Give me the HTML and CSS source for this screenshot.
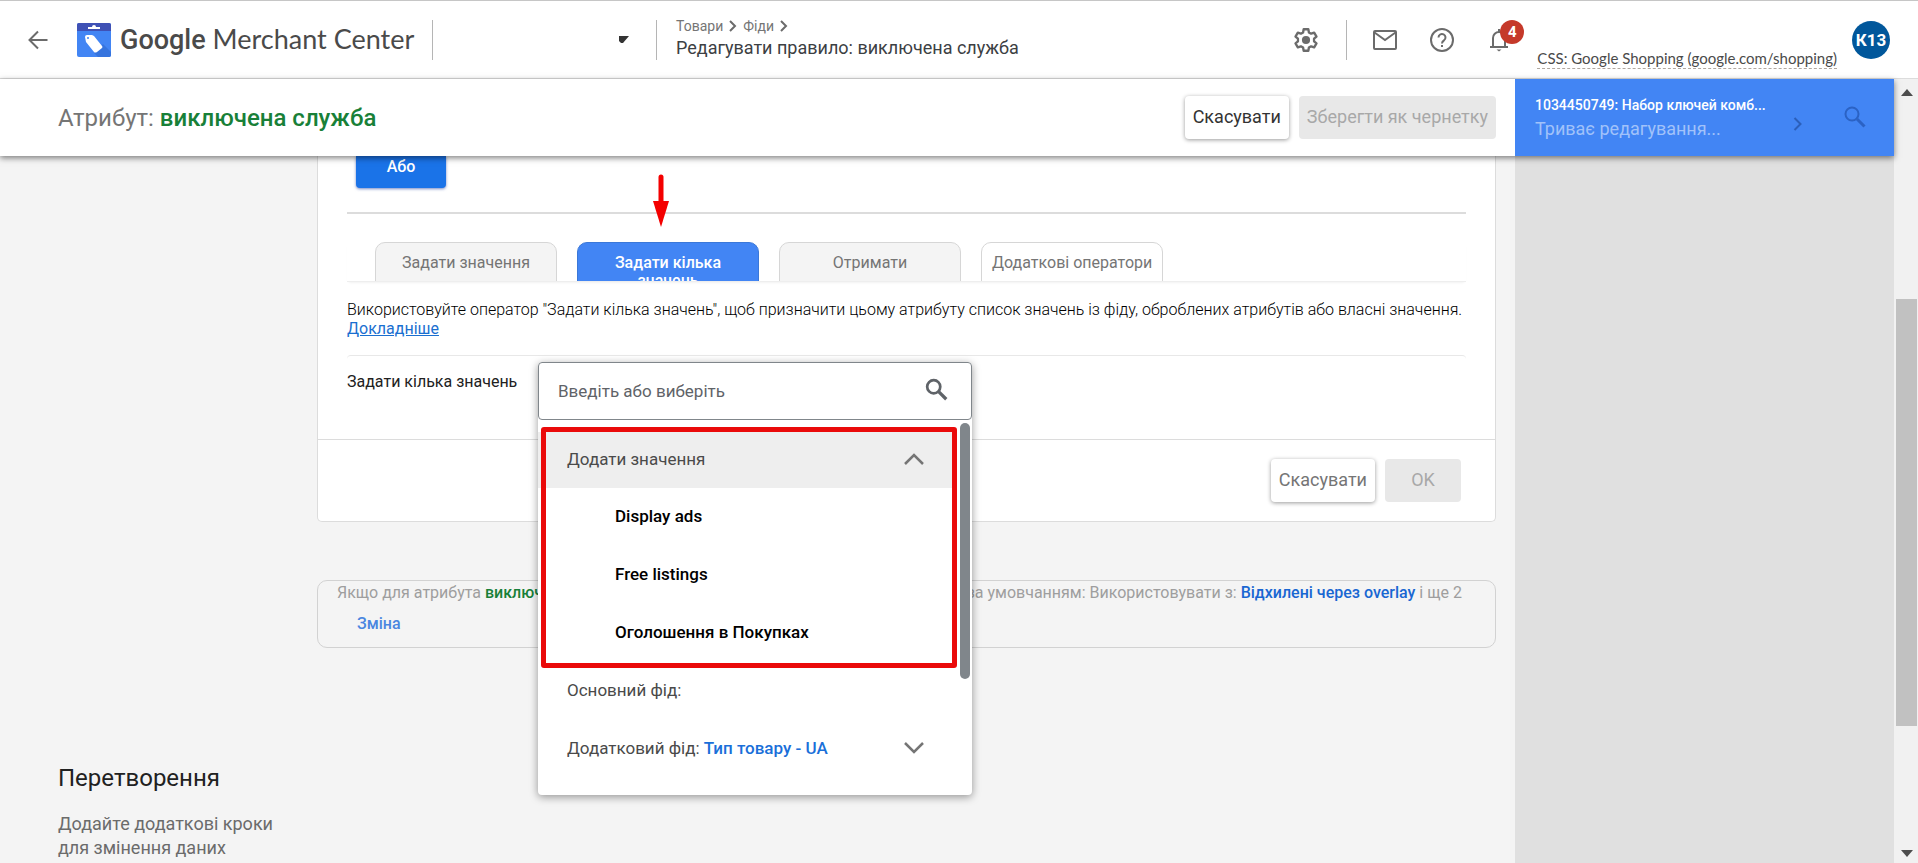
FILE: index.html
```html
<!DOCTYPE html>
<html lang="uk">
<head>
<meta charset="utf-8">
<title>Google Merchant Center</title>
<meta name="viewport" content="width=device-width, initial-scale=1">
<link rel="stylesheet" href="styles.css">
</head>
<body>
<header class="topbar">
  <button class="icon-btn back" aria-label="Назад"><svg width="20" height="20" viewBox="0 0 20 20" fill="none" stroke="#6b6b6b" stroke-width="2"><path d="M19.500 10H2M10 1.500L1.500 10L10 18.500"/></svg></button>
  <svg class="logo" width="34" height="34" viewBox="0 0 34 34"><rect width="34" height="34" rx="2" fill="#4285f4"/><path d="M0 8V2a2 2 0 0 1 2-2h30a2 2 0 0 1 2 2v6z" fill="#3f51b5"/><path d="M11 4h4a2 2 0 0 1 4 0h4v2H11z" fill="#fff"/><path d="M17 30l9-9 8 8v3a2 2 0 0 1-2 2H21z" fill="#3674de"/><path d="M8 14q0-2 2-2h5l2 1 8 10q1 1 0 2l-5 4q-2 1-3 0l-8-10z" fill="#fff"/><circle cx="11" cy="15" r="1" fill="#4285f4"/></svg>
  <div class="brand"><span class="brand-google">Google</span> Merchant Center</div>
  <button class="account-picker" aria-label="Вибрати обліковий запис"><svg width="10" height="7" viewBox="0 0 10 7"><path d="M0 0h10L4 7H2L0 5z" fill="#333"/></svg></button>
  <div class="crumbs">
    <nav class="trail"><a href="#">Товари</a><svg width="8" height="12" viewBox="0 0 8 12"><path d="M1 1l5 5-5 5"/></svg><a href="#">Фіди</a><svg width="8" height="12" viewBox="0 0 8 12"><path d="M1 1l5 5-5 5"/></svg></nav>
    <div class="page-title">Редагувати правило: виключена служба</div>
  </div>
  <div class="tools">
    <button class="icon-btn" aria-label="Налаштування"><svg width="28" height="28" viewBox="0 0 24 24" fill="none" stroke="#6b6b6b" stroke-width="2" stroke-linejoin="round"><path d="M10 2.800h4l.5 2.700 1.900 1.100 2.600-.9 2 3.400-2.100 1.800v2.200l2.100 1.800-2 3.400-2.600-.9-1.900 1.100-.5 2.700h-4l-.5-2.700-1.900-1.100-2.600.9-2-3.400 2.100-1.800v-2.200L3 9.100l2-3.400 2.600.9 1.900-1.100z"/><circle cx="12" cy="12" r="3.500" fill="#6b6b6b" stroke="none"/></svg></button>
    <span class="rule"></span>
    <button class="icon-btn" aria-label="Пошта"><svg width="24" height="20" viewBox="0 0 24 20" fill="none" stroke="#6b6b6b" stroke-width="2"><rect x="1" y="1" width="22" height="18" rx="1"/><path d="M1.500 2.500L12 10l10.500-7.500"/></svg></button>
    <button class="icon-btn" aria-label="Довідка"><svg width="24" height="24" viewBox="0 0 24 24" fill="none" stroke="#6b6b6b" stroke-width="2"><circle cx="12" cy="12" r="11"/><path d="M8.500 9.500a3.500 3.500 0 1 1 5.600 2.800C12.900 13.200 12 13.800 12 15.500"/><path d="M12 17v2"/></svg></button>
    <button class="icon-btn bell" aria-label="Сповіщення"><svg width="24" height="24" viewBox="-2 0 24 24" fill="none" stroke="#6b6b6b" stroke-width="2"><path d="M1 19h18M4 19V10a6 6 0 0 1 12 0v9M10 4V1"/><path d="M7.500 21.500h5l-2.500 2z" fill="#6b6b6b" stroke="none"/></svg><span class="badge">4</span></button>
  </div>
  <a class="css-link" href="#">CSS: Google Shopping (google.com/shopping)</a>
  <button class="avatar">К13</button>
</header>

<div class="below">
  <div class="page">
    <div class="actionbar">
      <h1 class="attribute">Атрибут: <b>виключена служба</b></h1>
      <button class="btn">Скасувати</button>
      <button class="btn btn-off" disabled>Зберегти як чернетку</button>
      <div class="product">
        <div class="product-text"><div class="product-name">1034450749: Набор ключей комб...</div><div class="product-state">Триває редагування...</div></div>
        <svg class="product-next" width="10" height="16" viewBox="0 0 10 16" fill="none" stroke="#2b5fba" stroke-width="2"><path d="M1.500 2l6 6-6 6"/></svg>
        <svg width="22" height="22" viewBox="0 0 22 22" fill="none" stroke="#2b62c4" stroke-width="2"><circle cx="8" cy="8" r="6.500"/><path d="M13 13l7.500 7.500" stroke-width="3"/></svg>
      </div>
    </div>
    <div class="body">
      <main class="content">
        <div class="card">
          <div class="card-main">
            <button class="or-btn">Або</button>
            <hr class="line">
            <svg class="pointer" width="16" height="53" viewBox="0 0 16 53"><path d="M8 3v27" stroke="#f40000" stroke-width="5" stroke-linecap="round"/><path d="M0 27h16L8 53z" fill="#f40000"/></svg>
            <div class="tabs" role="tablist">
              <button class="tab" role="tab">Задати значення</button>
              <button class="tab tab-on" role="tab" aria-selected="true">Задати кілька значень</button>
              <button class="tab" role="tab">Отримати</button>
              <button class="tab tab-more" role="tab">Додаткові оператори</button>
            </div>
            <p class="hint">Використовуйте оператор "Задати кілька значень", щоб призначити цьому атрибуту список значень із фіду, оброблених атрибутів або власні значення.<br><a href="#">Докладніше</a></p>
            <div class="field">
              <label class="field-label" for="values">Задати кілька значень</label>
              <div class="combo">
                <div class="combo-box">
                  <input id="values" type="text" placeholder="Введіть або виберіть">
                  <svg width="24" height="24" viewBox="0 0 22 22" fill="none" stroke="#5f6368" stroke-width="2.500"><circle cx="8" cy="8" r="6"/><path d="M12.500 12.500l7 7" stroke-width="3"/></svg>
                </div>
                <div class="menu">
                  <div class="menu-head">Додати значення<svg width="20" height="12" viewBox="0 0 20 12"><path d="M1 11l9-9 9 9"/></svg></div>
                  <div class="menu-item">Display ads</div>
                  <div class="menu-item">Free listings</div>
                  <div class="menu-item">Оголошення в Покупках</div>
                  <div class="menu-row">Основний фід:</div>
                  <div class="menu-row"><span>Додатковий фід: <b>Тип товару - UA</b></span><svg width="20" height="12" viewBox="0 0 20 12"><path d="M1 1l9 9 9-9"/></svg></div>
                  <span class="highlight"></span>
                  <span class="menu-thumb"></span>
                </div>
              </div>
            </div>
          </div>
          <div class="card-foot">
            <button class="btn btn-soft">Скасувати</button>
            <button class="btn btn-off btn-ok" disabled>OK</button>
          </div>
        </div>
        <div class="fallback">
          <div class="fallback-text"><span>Якщо для атрибута <b class="green">виключена служба</b></span><span>правило за умовчанням: Використовувати з: <b class="blue">Відхилені через overlay</b> і ще 2</span></div>
          <a class="change" href="#">Зміна</a>
        </div>
        <section class="transform">
          <h2>Перетворення</h2>
          <p>Додайте додаткові кроки для змінення даних</p>
        </section>
      </main>
      <aside class="preview"></aside>
    </div>
  </div>
  <div class="scrollbar">
    <svg width="12" height="7" viewBox="0 0 12 7"><path d="M6 0l6 7H0z" fill="#4d4d4d"/></svg>
    <div class="track"><div class="thumb"></div></div>
    <svg width="12" height="7" viewBox="0 0 12 7"><path d="M0 0h12L6 7z" fill="#4d4d4d"/></svg>
  </div>
</div>
</body>
</html>
```
FILE: styles.css
```css
* { box-sizing: border-box; }
body {
  margin: 0;
  height: 100vh;
  overflow: hidden;
  display: flex;
  flex-direction: column;
  font-family: Roboto, "Liberation Sans", sans-serif;
  font-size: 16px;
  color: #212121;
  background: #f4f4f4;
}
button { font: inherit; border: 0; padding: 0; background: none; cursor: pointer; }
a { color: inherit; text-decoration: none; }
svg { display: block; flex: none; }

.topbar {
  display: flex;
  align-items: center;
  height: 79px;
  flex: none;
  padding: 0 28px;
  background: #fff;
  border-top: 1px solid #c6c6c6;
  border-bottom: 1px solid #dcdcdc;
}
.logo { margin: 0 9px 0 29px; }
.brand { font-family: Lato, Roboto, sans-serif; font-size: 27px; line-height: 36px; color: #4a4a4a; white-space: nowrap; width: 312px; }
.brand-google { font-family: Roboto, sans-serif; font-weight: 500; }
.account-picker {
  width: 225px;
  height: 40px;
  padding-right: 27px;
  display: flex;
  align-items: center;
  justify-content: flex-end;
  border-left: 1px solid #b5b5b5;
  border-right: 1px solid #b5b5b5;
}
.crumbs { margin-left: 19px; white-space: nowrap; }
.trail { display: flex; align-items: center; gap: 6px; font-size: 14px; line-height: 18px; color: #757575; }
.trail svg { fill: none; stroke: #6b6b6b; stroke-width: 2; }
.page-title { padding-bottom: 2px; font-size: 18px; line-height: 26px; color: #3c4043; }
.tools { margin-left: auto; display: flex; align-items: center; gap: 33px; }
.tools .rule { width: 1px; height: 40px; margin: 0 -7px; background: #b5b5b5; }
.bell { position: relative; }
.badge {
  position: absolute;
  left: 13px;
  top: -8px;
  width: 24px;
  height: 24px;
  border-radius: 50%;
  background: #c5392a;
  color: #fff;
  font-size: 15px;
  font-weight: 700;
  line-height: 24px;
  text-align: center;
}
.css-link {
  align-self: flex-end;
  margin: 0 15px 9px 26px;
  font-family: Lato, Roboto, sans-serif;
  font-size: 15px;
  line-height: 20px;
  color: #4a4a4a;
  border-bottom: 1px dashed #b0a8a0;
  white-space: nowrap;
}
.avatar {
  width: 38px;
  height: 38px;
  border-radius: 50%;
  background: #01579b;
  color: #fff;
  font-size: 17px;
  font-weight: 700;
}

.below { flex: 1; min-height: 0; display: flex; }
.page { flex: 1; min-width: 0; display: flex; flex-direction: column; }
.actionbar {
  position: relative;
  z-index: 2;
  flex: none;
  display: flex;
  align-items: center;
  gap: 10px;
  height: 77px;
  padding-left: 58px;
  background: #fff;
  box-shadow: 0 2px 6px rgba(0, 0, 0, .5);
}
.attribute { flex: 1; margin: 0; font-size: 24px; font-weight: 400; color: #757575; }
.attribute b { font-weight: 500; color: #188038; }
.btn {
  height: 43px;
  padding: 0 8px 2px;
  border-radius: 4px;
  background: #fff;
  color: #333;
  font-size: 18px;
  box-shadow: 0 1px 4px rgba(0, 0, 0, .4);
}
.btn-off { background: #e8e8e8; color: #a8a8a8; box-shadow: none; }
.btn-soft { color: #757575; }
.btn-ok { width: 76px; }
.product {
  align-self: stretch;
  width: 379px;
  margin-left: 9px;
  padding: 0 28px 2px 20px;
  display: flex;
  align-items: center;
  background: #4285f4;
}
.product-text { flex: 1; white-space: nowrap; }
.product-name { font-size: 14px; font-weight: 500; line-height: 24px; color: #fff; }
.product-state { font-size: 18px; line-height: 24px; color: #a1c2fa; }
.product-next { margin: 14px 41px 0 0; }

.body { flex: 1; min-height: 0; display: flex; }
.content { flex: 1; min-width: 0; padding-right: 19px; }
.preview { width: 379px; background: #e0e0e0; }
.card {
  margin-left: 317px;
  background: #fff;
  border: 1px solid #dcdcdc;
  border-top: 0;
  border-radius: 0 0 5px 5px;
}
.card-main { position: relative; padding: 0 29px 20px; }
.or-btn {
  display: block;
  width: 90px;
  height: 32px;
  margin-left: 9px;
  padding-bottom: 12px;
  border-radius: 0 0 4px 4px;
  background: #1a73e8;
  color: #fff;
  font-weight: 500;
  box-shadow: 0 1px 3px rgba(26, 60, 160, .6);
}
.line { height: 2px; margin: 24px 0 28px; border: 0; background: #dcdcdc; }
.pointer { position: absolute; left: 335px; top: 18px; }
.tabs {
  display: flex;
  gap: 20px;
  height: 40px;
  padding: 0 28px;
  overflow: hidden;
  border-bottom: 1px solid #eee;
  box-shadow: 0 2px 3px -2px rgba(0, 0, 0, .1);
}
.tab {
  flex: 0 0 182px;
  height: 60px;
  padding: 0 10px;
  border: 1px solid #d6d6d6;
  border-radius: 10px 10px 0 0;
  background: #f4f4f4;
  color: #757575;
  line-height: 18px;
  display: flex;
  justify-content: center;
  padding-top: 11px;
}
.tab-on { padding: 11px 35px 0; background: #4285f4; border-color: #3b78d8; color: #fff; font-weight: 500; }
.tab-more { background: #fff; white-space: nowrap; }
.hint { margin: 18px 0 17px; line-height: 19px; font-weight: 300; white-space: nowrap; color: #000; }
.hint a { color: #1a6fd0; font-weight: 400; text-decoration: underline; }
.field {
  display: flex;
  height: 64px;
  padding-top: 6px;
  border-top: 1px solid #e8e8e8;
  border-radius: 4px;
}
.field-label { flex: 0 0 191px; line-height: 40px; white-space: nowrap; }
.combo { flex: 0 0 434px; position: relative; height: 58px; }
.combo-box {
  position: relative;
  z-index: 1;
  display: flex;
  align-items: center;
  height: 58px;
  padding: 0 22px 0 19px;
  background: #fff;
  border: 1px solid #80868b;
  border-radius: 4px;
}
.combo-box svg { margin-bottom: 2px; }
.combo input { flex: 1; min-width: 0; border: 0; outline: 0; padding: 0; font: inherit; font-size: 17px; background: none; }
.combo input::placeholder { color: #5f6368; opacity: 1; }
.menu {
  position: absolute;
  left: 0;
  right: 0;
  top: 0;
  padding: 70px 0 17px;
  background: #fff;
  border-radius: 4px;
  box-shadow: 0 2px 8px rgba(0, 0, 0, .4);
  z-index: 0;
  font-size: 17px;
}
.menu-head, .menu-row, .menu-item {
  display: flex;
  align-items: center;
  justify-content: space-between;
  height: 58px;
  padding: 0 48px 3px 29px;
  color: #4a4a4a;
}
.menu-head { height: 56px; margin-right: 16px; padding-right: 32px; background: #eee; }
.menu-item { padding-left: 77px; color: #000; font-weight: 500; }
.menu svg { fill: none; stroke: #757575; stroke-width: 2.500; }
.menu b { color: #1a6fd9; font-weight: 500; }
.highlight {
  position: absolute;
  left: 3px;
  right: 15px;
  top: 65px;
  height: 241px;
  border: 5px solid #ea0a0a;
  border-radius: 3px;
}
.menu-thumb { position: absolute; right: 2px; top: 61px; width: 10px; height: 256px; border-radius: 5px; background: #80868b; }
.card-foot {
  display: flex;
  justify-content: flex-end;
  gap: 10px;
  padding: 19px 34px;
  border-top: 1px solid #dcdcdc;
}
.fallback {
  margin: 58px 0 0 317px;
  height: 68px;
  padding: 2px 33px 0 19px;
  border: 1px solid #d2d2d2;
  border-radius: 10px;
  white-space: nowrap;
}
.fallback-text { display: flex; justify-content: space-between; line-height: 19px; color: #9e9e9e; }
.fallback b { font-weight: 500; }
.green { color: #188038; }
.blue { color: #1967d2; }
.change { display: inline-block; margin: 12px 0 0 20px; line-height: 20px; font-weight: 500; color: #4a86e0; }
.transform { width: 240px; margin: 116px 0 0 58px; }
.transform h2 { margin: 0 0 20px; font-size: 24px; font-weight: 400; line-height: 28px; }
.transform p { width: 225px; margin: 0; font-size: 18px; line-height: 24px; color: #6b6b6b; }

.scrollbar {
  width: 24px;
  flex: none;
  padding: 10px 1px 6px 2px;
  display: flex;
  flex-direction: column;
  align-items: center;
  background: #f1f1f1;
}
.track { flex: 1; width: 100%; padding: 203px 0 124px; display: flex; }
.thumb { flex: 1; background: #c1c1c1; }
```
